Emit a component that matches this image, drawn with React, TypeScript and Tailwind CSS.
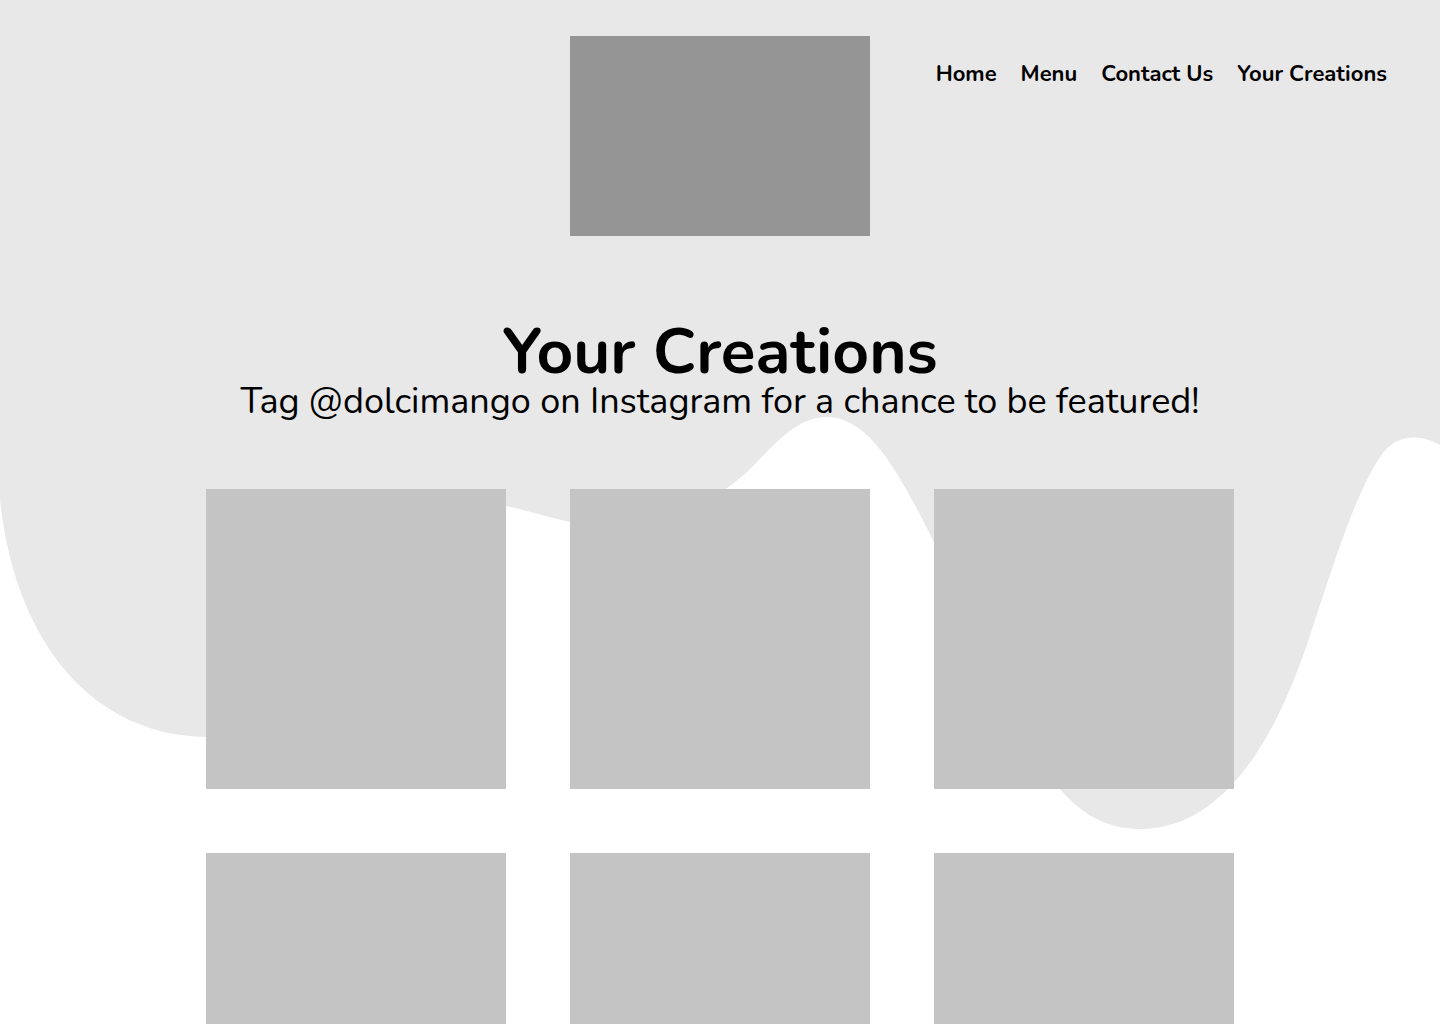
import React from "react";

const navLinks = ["Home", "Menu", "Contact Us", "Your Creations"];

// grey drip behind the header, hand traced along its lower edge
const dripPath =
    "M0,0 H1440 V445 " +
    "C1425,436 1398,430 1380,457 " +
    "C1355,495 1335,560 1315,620 " +
    "C1290,700 1240,829 1140,829 " +
    "C1100,829 1075,808 1055,783 " +
    "C1010,725 965,600 933,540 " +
    "C900,475 870,417 827,417 " +
    "C800,417 780,438 757,462 " +
    "C740,480 720,495 700,503 " +
    "C660,520 610,530 570,522 " +
    "C550,518 530,511 506,506 " +
    "C420,490 300,737 206,737 " +
    "C90,735 15,640 0,500 Z";

const Backdrop = () => (
    <svg className="absolute left-0 top-0" width="1440" height="840" viewBox="0 0 1440 840" aria-hidden="true">
        <path d={dripPath} fill="#e8e8e8" />
    </svg>
);

const Header = () => (
    <header className="grid grid-cols-[1fr_300px_1fr] pt-9">
        <div />
        <div className="h-[200px] w-[300px] bg-[#959595]" />
        <nav className="flex items-start justify-end gap-6 pr-[53px] pt-[23px]">
            {navLinks.map((link) => (
                <a key={link} href="#" className="text-[22px] font-bold leading-[30px] text-black">
                    {link}
                </a>
            ))}
        </nav>
    </header>
);

const App = () => {
    const creations = Array.from({ length: 6 }, (_, i) => i);

    return (
        <div className="relative min-h-screen w-full overflow-hidden bg-white font-['Nunito','Lato',sans-serif] text-black">
            <Backdrop />
            <div className="relative">
                <Header />

                <section className="flex flex-col items-center pt-[84px]">
                    <h1 className="text-[64px] font-bold leading-[64px]">Your Creations</h1>
                    <p className="text-[36px] leading-[36px]">Tag @dolcimango on Instagram for a chance to be featured!</p>
                </section>

                <section className="mx-auto mt-[69px] grid w-[1028px] grid-cols-3 gap-16 pb-16">
                    {creations.map((item) => (
                        <div key={item} className="h-[300px] w-[300px] bg-[#c4c4c4]" />
                    ))}
                </section>
            </div>
        </div>
    );
};

export default App;
